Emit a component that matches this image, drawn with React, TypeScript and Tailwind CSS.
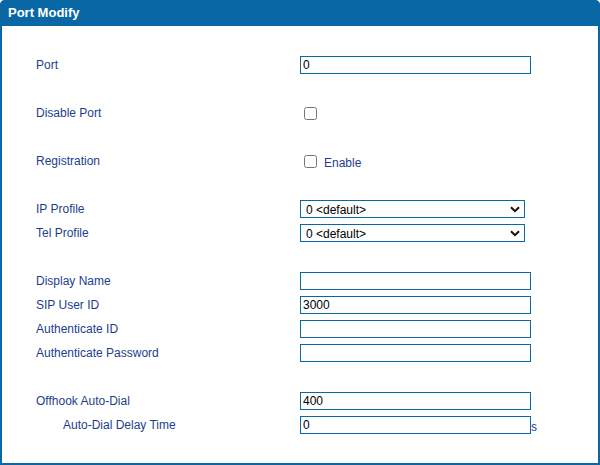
const label = "text-[12px] text-[#1d3d8f]";
const inputCls =
  "block w-[231px] h-[18px] border border-[#0a67a5] bg-white px-[2px] text-[12px] text-black outline-none";

const TextField = ({ value = "" }: { value?: string }) => (
  <input type="text" defaultValue={value} className={inputCls} />
);

const SelectField = ({ value }: { value: string }) => (
  <div className="relative w-[225px] h-[18px]">
    <select
      defaultValue={value}
      className="block w-full h-full appearance-none border border-[#0a67a5] bg-white pl-[5px] text-[12px] text-black outline-none"
    >
      <option value={value}>{value}</option>
    </select>
    <svg
      className="pointer-events-none absolute right-[5px] top-[6px]"
      width="10"
      height="7"
      viewBox="0 0 10 7"
    >
      <path d="M1 1.2l4 4 4-4" fill="none" stroke="#111" strokeWidth="2" />
    </svg>
  </div>
);

type Row = { name?: string; indent?: boolean; control?: React.ReactNode };

const rows: Row[] = [
  { name: "Port", control: <TextField value="0" /> },
  {},
  { name: "Disable Port", control: <input type="checkbox" className="ml-1 w-[13px] h-[13px]" /> },
  {},
  {
    name: "Registration",
    control: (
      <div className="flex items-center">
        <input type="checkbox" className="ml-1 w-[13px] h-[13px]" />
        <span className={`${label} ml-[7px] mt-[3px]`}>Enable</span>
      </div>
    ),
  },
  {},
  { name: "IP Profile", control: <SelectField value="0 <default>" /> },
  { name: "Tel Profile", control: <SelectField value="0 <default>" /> },
  {},
  { name: "Display Name", control: <TextField /> },
  { name: "SIP User ID", control: <TextField value="3000" /> },
  { name: "Authenticate ID", control: <TextField /> },
  { name: "Authenticate Password", control: <TextField /> },
  {},
  { name: "Offhook Auto-Dial", control: <TextField value="400" /> },
  {
    name: "Auto-Dial Delay Time",
    indent: true,
    control: (
      <div className="flex items-end">
        <TextField value="0" />
        <span className={`${label} leading-[14px]`}>s</span>
      </div>
    ),
  },
];

export default function App() {
  return (
    <div
      className="w-[600px] h-[465px] bg-white"
      style={{ fontFamily: '"Liberation Sans", Arial, sans-serif' }}
    >
      <div className="flex flex-col h-full rounded-t-[5px] border-2 border-t-0 border-[#0a67a5]">
        <div className="h-[26px] -mx-[2px] rounded-t-[5px] bg-[#0a67a5] flex items-center pl-[8px]">
          <span className="text-[13px] font-bold text-white">Port Modify</span>
        </div>
        <div className="flex flex-col pt-[27px]">
          {rows.map((r, i) => (
            <div key={i} className="h-6 flex items-center">
              {r.name && (
                <>
                  <div className={`${label} w-[298px] ${r.indent ? "pl-[61px]" : "pl-[34px]"}`}>
                    {r.name}
                  </div>
                  {r.control}
                </>
              )}
            </div>
          ))}
        </div>
      </div>
    </div>
  );
}
